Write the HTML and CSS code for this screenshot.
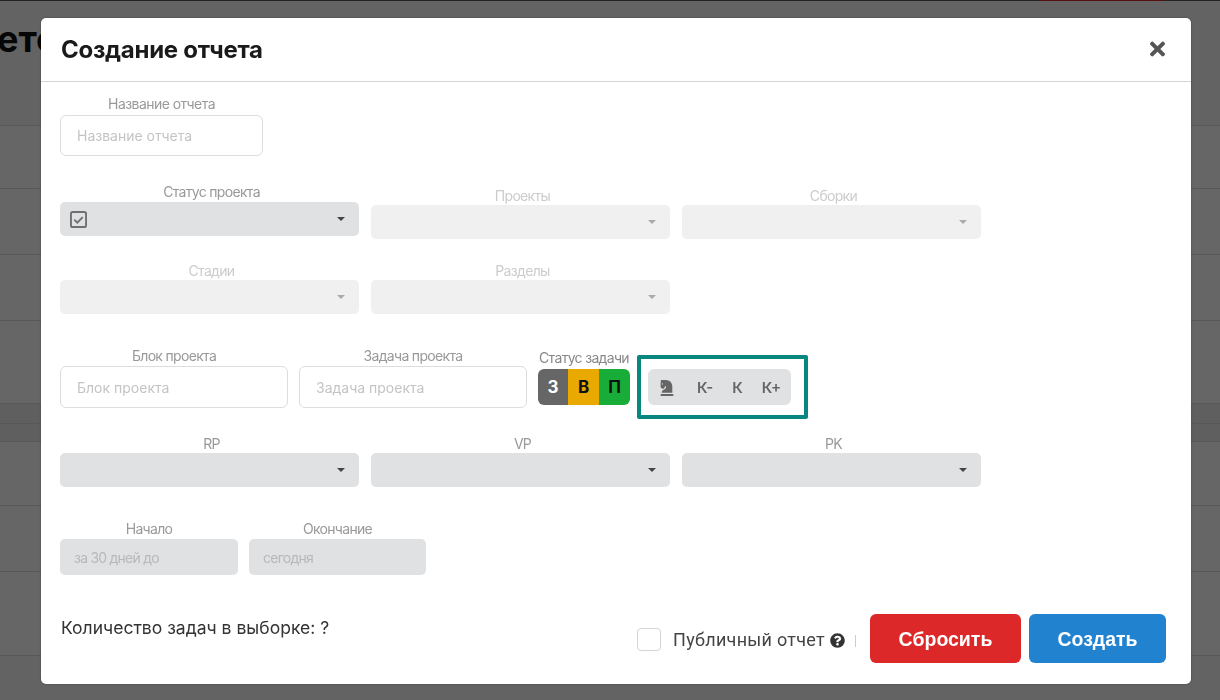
FILE: index.html
```html
<!DOCTYPE html>
<html lang="ru">
<head>
  <meta charset="UTF-8">
  <title>Создание отчета</title>
  <link rel="stylesheet" href="styles.css">
</head>
<body>
  <!-- page behind the modal -->
  <div class="page">
    <div class="topbar"><div class="topbar-btn"></div></div>
    <div class="page-head"><h1>ето</h1></div>
    <div class="row row-63"></div>
    <div class="row row-66"></div>
    <div class="row row-66"></div>
    <div class="row row-83"></div>
    <div class="row row-20 row-dark"></div>
    <div class="row row-18 row-dark"></div>
    <div class="row row-64"></div>
    <div class="row row-66"></div>
    <div class="row row-84"></div>
    <div class="page-foot"></div>
  </div>

  <div class="overlay">
    <div class="modal">
      <div class="modal-head">
        <h2>Создание отчета</h2>
        <svg class="close-icon" viewBox="0 0 352 512"><path d="M242.72 256l100.07-100.07c12.28-12.28 12.28-32.19 0-44.48l-22.24-22.24c-12.28-12.28-32.19-12.28-44.48 0L176 189.28 75.93 89.21c-12.28-12.28-32.19-12.28-44.48 0L9.21 111.45c-12.28 12.28-12.28 32.19 0 44.48L109.28 256 9.21 356.07c-12.28 12.28-12.28 32.19 0 44.48l22.24 22.24c12.28 12.28 32.2 12.28 44.48 0L176 322.72l100.07 100.07c12.28 12.28 32.2 12.28 44.48 0l22.24-22.24c12.28-12.28 12.28-32.19 0-44.48L242.72 256z"/></svg>
      </div>

      <div class="modal-body">
        <div class="form-row first-row">
          <div class="field w-203">
            <label class="gap-3 name-label">Название отчета</label>
            <input class="text-input" placeholder="Название отчета">
          </div>
        </div>

        <div class="form-row row-status">
          <div class="field w-299">
            <label class="gap-2">Статус проекта</label>
            <div class="select">
              <svg class="check-icon" viewBox="0 0 18 18"><rect x="1" y="1" width="16" height="16" rx="2" fill="none" stroke="#707070" stroke-width="2"/><path d="M4.5 9.2l3.2 3.2 5.8-6" fill="none" stroke="#707070" stroke-width="2"/></svg>
            </div>
          </div>
          <div class="field w-299 field-low disabled">
            <label>Проекты</label>
            <div class="select"></div>
          </div>
          <div class="field w-299 field-low disabled">
            <label>Сборки</label>
            <div class="select"></div>
          </div>
        </div>

        <div class="form-row row-stage">
          <div class="field w-299 disabled">
            <label>Стадии</label>
            <div class="select"></div>
          </div>
          <div class="field w-299 disabled">
            <label>Разделы</label>
            <div class="select"></div>
          </div>
        </div>

        <div class="form-row row-block">
          <div class="field w-228">
            <label class="gap-2">Блок проекта</label>
            <input class="text-input tall" placeholder="Блок проекта">
          </div>
          <div class="field w-228">
            <label class="gap-2">Задача проекта</label>
            <input class="text-input tall" placeholder="Задача проекта">
          </div>
          <div class="field task-status">
            <label class="gap-3">Статус задачи</label>
            <div class="btn-group">
              <span class="seg seg-grey">З</span>
              <span class="seg seg-yellow">В</span>
              <span class="seg seg-green">П</span>
            </div>
          </div>
          <div class="teal-box">
            <div class="class-group">
              <svg class="knight-icon" viewBox="0 0 384 512"><path d="M19 272.47l40.63 18.06a32 32 0 0 0 24.88.47l12.78-5.12a32 32 0 0 0 18.76-20.5l9.22-30.65a24 24 0 0 1 12.55-15.65L159.94 208v50.33a48 48 0 0 1-26.53 42.94l-57.22 28.65A80 80 0 0 0 32 401.48V416h319.86V224c0-106-85.92-192-191.92-192H12A12 12 0 0 0 0 44a16.9 16.9 0 0 0 1.79 7.58L16 80l-9 9a24 24 0 0 0-7 17v137.21a32 32 0 0 0 19 29.26zM52 128a20 20 0 1 1-20 20 20 20 0 0 1 20-20zm316 320H16a16 16 0 0 0-16 16v32a16 16 0 0 0 16 16h352a16 16 0 0 0 16-16v-32a16 16 0 0 0-16-16z"/></svg>
              <span class="class-k k-minus">К-</span>
              <span class="class-k k-mid">К</span>
              <span class="class-k k-plus">К+</span>
            </div>
          </div>
        </div>

        <div class="form-row row-people">
          <div class="field w-299">
            <label>RP</label>
            <div class="select"></div>
          </div>
          <div class="field w-299">
            <label>VP</label>
            <div class="select"></div>
          </div>
          <div class="field w-299">
            <label>PK</label>
            <div class="select"></div>
          </div>
        </div>

        <div class="form-row row-dates">
          <div class="field w-178">
            <label class="gap-2">Начало</label>
            <input class="date-input" placeholder="за 30 дней до" disabled>
          </div>
          <div class="field w-177">
            <label class="gap-2">Окончание</label>
            <input class="date-input" placeholder="сегодня" disabled>
          </div>
        </div>

        <div class="modal-foot">
          <div class="task-count">Количество задач в выборке: ?</div>
          <div class="foot-actions">
            <span class="checkbox"></span>
            <span class="public-label">Публичный отчет</span>
            <svg class="help-icon" viewBox="0 0 512 512"><path d="M504 256c0 136.997-111.043 248-248 248S8 392.997 8 256C8 119.083 119.043 8 256 8s248 111.083 248 248zM262.655 90c-54.497 0-89.255 22.957-116.549 63.758-3.536 5.286-2.353 12.415 2.715 16.258l34.699 26.31c5.205 3.947 12.621 3.008 16.665-2.122 17.864-22.658 30.113-35.797 57.303-35.797 20.429 0 45.698 13.148 45.698 32.958 0 14.976-12.363 22.667-32.534 33.976C247.128 238.528 216 254.941 216 296v4c0 6.627 5.373 12 12 12h56c6.627 0 12-5.373 12-12v-1.333c0-28.462 83.186-29.647 83.186-106.667 0-58.002-60.165-102-116.531-102zM256 338c-25.365 0-46 20.635-46 46 0 25.364 20.635 46 46 46s46-20.636 46-46c0-25.365-20.635-46-46-46z"/></svg>
            <span class="divider"></span>
            <button class="btn btn-reset">Сбросить</button>
            <button class="btn btn-create">Создать</button>
          </div>
        </div>
      </div>
    </div>
  </div>
</body>
</html>
```

FILE: styles.css
```css
* {
  box-sizing: border-box;
}
html, body {
  height: 100%;
}
body {
  margin: 0;
  overflow: hidden;
  background: #fff;
  font-family: Inter, "Noto Sans", sans-serif;
}

/* page behind the modal */
.topbar {
  height: 1px;
  background: #555;
  display: flex;
  justify-content: flex-end;
  padding-right: 56px;
}
.topbar-btn {
  width: 124px;
  background: #dc2626;
}
.page-head {
  height: 125px;
  background: #f7f7f7;
  border-bottom: 1px solid #ddd;
  overflow: hidden;
}
.page-head h1 {
  margin: 16px 0 0 -3px;
  font-size: 36px;
  line-height: 44px;
  font-weight: 700;
  color: #111;
}
.row {
  border-bottom: 1px solid #ddd;
}
.row-63 { height: 63px; }
.row-66 { height: 66px; }
.row-83 { height: 83px; }
.row-20 { height: 20px; }
.row-18 { height: 18px; }
.row-64 { height: 64px; }
.row-84 { height: 84px; }
.row-dark {
  background: #eee;
}
.page-foot {
  height: 45px;
  background: #f7f7f7;
}

/* modal */
.overlay {
  position: fixed;
  inset: 0;
  background: rgba(0, 0, 0, 0.6);
  padding: 18px 29px 16px 41px;
}
.modal {
  height: 100%;
  background: #fff;
  border-radius: 5px;
  box-shadow: 0 0 2px rgba(0, 0, 0, 0.4);
}
.modal-head {
  height: 64px;
  display: flex;
  align-items: center;
  justify-content: space-between;
  padding: 0 26px 1px 20px;
  border-bottom: 1px solid #d5d5d5;
}
.modal-head h2 {
  margin: 0;
  font-size: 24px;
  font-weight: 700;
  letter-spacing: -0.28px;
  color: #1a1a1a;
}
.close-icon {
  width: 15px;
  height: 22px;
  fill: #555;
}
.modal-body {
  padding: 14px 25px 0 19px;
}

.form-row {
  display: flex;
  align-items: flex-start;
  gap: 12px;
}
.row-status { margin-top: 28px; }
.row-stage { margin-top: 24px; }
.row-block { margin-top: 34px; gap: 11px; }
.row-people { margin-top: 17px; }
.row-dates { margin-top: 34px; gap: 11px; }

.field label {
  display: block;
  height: 16px;
  margin-bottom: 1px;
  font-size: 14px;
  line-height: 16px;
  letter-spacing: -0.68px;
  text-align: center;
  color: #999;
}
.field label.gap-2 { margin-bottom: 2px; }
.field label.gap-3 { margin-bottom: 3px; }
.field label.name-label { letter-spacing: -0.55px; }
.field-low {
  margin-top: 4px;
}
.w-203 { width: 203px; }
.w-299 { width: 299px; }
.w-299 label { padding-left: 4px; }
.w-228 { width: 228px; }
.w-178 { width: 178px; }
.w-177 { width: 177px; }

.text-input {
  display: block;
  width: 100%;
  height: 41px;
  padding: 0 16px;
  border: 1px solid #ddd;
  border-radius: 6px;
  outline: none;
  font-family: inherit;
  font-size: 14px;
}
.text-input.tall {
  height: 42px;
}
.text-input::placeholder {
  color: #c4c4c4;
  opacity: 1;
}

.select {
  position: relative;
  height: 34px;
  background: #e0e1e3;
  border-radius: 5px;
  display: flex;
  align-items: center;
  padding-left: 10px;
}
.select::after {
  content: "";
  position: absolute;
  right: 14px;
  top: 15px;
  border-left: 4px solid transparent;
  border-right: 4px solid transparent;
  border-top: 4px solid #444;
}
.check-icon {
  width: 17px;
  height: 17px;
}
.disabled label {
  color: #ccc;
}
.disabled .select {
  background: #f0f0f0;
}
.disabled .select::after {
  border-top-color: #aaa;
}

/* task status and class buttons */
.task-status {
  width: 92px;
  margin-top: 2px;
}
.task-status label {
  white-space: nowrap;
  color: #888;
}
.btn-group {
  display: flex;
  height: 36px;
  border-radius: 6px;
  overflow: hidden;
}
.seg {
  display: flex;
  align-items: center;
  justify-content: center;
  width: 31px;
  font-size: 17px;
  font-weight: 700;
  color: #111;
}
.seg-grey { width: 30px; background: #666; color: #fff; }
.seg-yellow { background: #e9a900; }
.seg-green { background: #18ad38; }

.teal-box {
  width: 171px;
  height: 64px;
  margin: 7px 0 0 -4px;
  padding: 10px 13px 10px 7px;
  border: 4px solid #07877f;
  border-radius: 2px;
}
.class-group {
  display: flex;
  align-items: center;
  height: 36px;
  padding-left: 12px;
  background: #e0e1e3;
  border-radius: 6px;
}
.knight-icon {
  width: 14px;
  height: 17px;
  fill: #666;
}
.class-k {
  font-size: 15px;
  font-weight: 600;
  color: #666;
}
.k-minus { margin-left: 23px; }
.k-mid { margin-left: 19px; }
.k-plus { margin-left: 19px; }

.date-input {
  display: block;
  width: 100%;
  height: 36px;
  padding: 1px 14px 0;
  border: none;
  border-radius: 5px;
  background: #e0e1e3;
  font-family: inherit;
  font-size: 14px;
  letter-spacing: -0.76px;
}
.date-input::placeholder {
  color: #b8b8b8;
  opacity: 1;
}

/* footer */
.modal-foot {
  display: flex;
  justify-content: space-between;
  margin-top: 39px;
}
.task-count {
  margin: 3px 0 0 1px;
  font-size: 17.55px;
  line-height: 22px;
  color: #333;
}
.foot-actions {
  display: flex;
  align-items: center;
}
.checkbox {
  width: 24px;
  height: 23px;
  border: 1px solid #d5d5d5;
  border-radius: 4px;
  margin-top: 2px;
}
.public-label {
  margin: 2px 0 0 12px;
  font-family: Roboto, sans-serif;
  font-size: 18px;
  letter-spacing: 0.28px;
  color: #444;
}
.help-icon {
  width: 15px;
  height: 15px;
  margin: 3px 0 0 5px;
  fill: #333;
}
.divider {
  width: 1px;
  height: 12px;
  margin: 4px 14px 0 10px;
  background: #ccc;
}
.btn {
  height: 49px;
  padding: 2px 0 0;
  border: none;
  border-radius: 6px;
  font-family: "Liberation Sans", sans-serif;
  font-size: 19.5px;
  font-weight: 700;
  color: #fff;
}
.btn-reset {
  width: 151px;
  background: #dc2828;
}
.btn-create {
  width: 137px;
  margin-left: 8px;
  background: #2183d0;
}
```
